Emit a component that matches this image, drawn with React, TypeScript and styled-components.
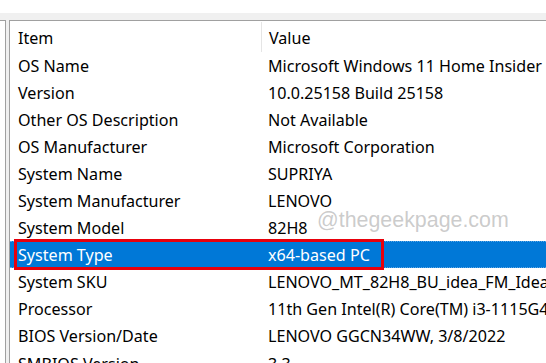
import React from "react";
import styled, { createGlobalStyle } from "styled-components";

const Global = createGlobalStyle`
  html, body { margin: 0; padding: 0; background: #fff; overflow: hidden; }
  body { width: 546px; height: 363px; }
`;

const Page = styled.div`
  width: 546px;
  height: 363px;
  display: flex;
  flex-direction: column;
  background: #fff;
  font-family: "Noto Sans", "Open Sans", sans-serif;
  overflow: hidden;
`;

const TopBlank = styled.div`
  height: 13px;
  flex: none;
  background: #fff;
`;

const Band = styled.div`
  height: 7px;
  flex: none;
  background: #f0f0f0;
`;

const Main = styled.div`
  flex: 1;
  display: flex;
  background: #f0f0f0;
  min-height: 0;
`;

const TreePane = styled.div`
  width: 5px;
  flex: none;
  background: #fff;
  border-top: 1px solid #a0a0a0;
  border-right: 1px solid #a0a0a0;
`;

const Splitter = styled.div`
  width: 3px;
  flex: none;
`;

const ListPane = styled.div`
  position: relative;
  flex: 1;
  background: #fff;
  border-top: 1px solid #a0a0a0;
  border-left: 1px solid #a0a0a0;
  display: flex;
  flex-direction: column;
  overflow: hidden;
`;

const Row = styled.div<{ $header?: boolean; $selected?: boolean }>`
  position: relative;
  flex: none;
  display: grid;
  grid-template-columns: 251px 1fr;
  height: ${(p) => (p.$header ? "30px" : "27.1px")};
  align-items: center;
  font-size: 16.1px;
  white-space: nowrap;
  color: ${(p) => (p.$selected ? "#fff" : "#000")};
  background: ${(p) => (p.$selected ? "#0078d7" : "transparent")};
`;

const Cell = styled.div<{ $value?: boolean; $header?: boolean }>`
  padding-left: ${(p) => (p.$value ? "7px" : "8px")};
  overflow: hidden;
  height: 100%;
  display: flex;
  align-items: center;
  padding-top: ${(p) => (p.$header ? "3px" : "2px")};
  box-sizing: border-box;
  border-left: ${(p) =>
    p.$header && p.$value ? "1px solid #e5e5e5" : "none"};
`;

const HeaderDivided = styled(Cell)`
  margin: 1px 0 0;
`;

const RedBox = styled.div`
  position: absolute;
  left: 4px;
  top: -2px;
  width: 364px;
  height: 25px;
  border: 3px solid #e8000b;
  pointer-events: none;
`;

const Focus = styled.div`
  position: absolute;
  inset: 0;
  border-top: 1px dotted #5aa6e6;
  border-bottom: 1px dotted #5aa6e6;
  pointer-events: none;
`;

const Watermark = styled.div`
  position: absolute;
  left: 307px;
  top: 187px;
  font-family: "Liberation Sans", Arial, sans-serif;
  font-size: 21.4px;
  color: rgba(160, 160, 160, 0.55);
  pointer-events: none;
  white-space: nowrap;
`;

const rows: [string, string][] = [
  ["OS Name", "Microsoft Windows 11 Home Insider Preview"],
  ["Version", "10.0.25158 Build 25158"],
  ["Other OS Description", "Not Available"],
  ["OS Manufacturer", "Microsoft Corporation"],
  ["System Name", "SUPRIYA"],
  ["System Manufacturer", "LENOVO"],
  ["System Model", "82H8"],
  ["System Type", "x64-based PC"],
  ["System SKU", "LENOVO_MT_82H8_BU_idea_FM_IdeaPad Slim 3 15ITL6"],
  ["Processor", "11th Gen Intel(R) Core(TM) i3-1115G4 @ 3.00GHz"],
  ["BIOS Version/Date", "LENOVO GGCN34WW, 3/8/2022"],
  ["SMBIOS Version", "3.3"],
];

export default function App() {
  return (
    <Page>
      <Global />
      <TopBlank />
      <Band />
      <Main>
        <TreePane />
        <Splitter />
        <ListPane>
          <Row $header>
            <Cell $header>Item</Cell>
            <HeaderDivided $header $value>
              Value
            </HeaderDivided>
          </Row>
          {rows.map(([item, value]) => {
            const sel = item === "System Type";
            return (
              <Row key={item} $selected={sel}>
                <Cell>{item}</Cell>
                <Cell $value>{value}</Cell>
                {sel && <Focus />}
                {sel && <RedBox />}
              </Row>
            );
          })}
          <Watermark>@thegeekpage.com</Watermark>
        </ListPane>
      </Main>
    </Page>
  );
}
